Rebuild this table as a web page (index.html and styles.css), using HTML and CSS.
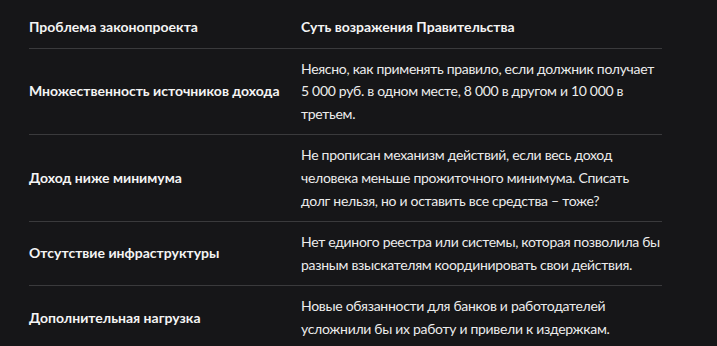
FILE: index.html
```html
<!DOCTYPE html>
<html lang="ru">
<head>
<meta charset="utf-8">
<link rel="stylesheet" href="styles.css">
</head>
<body>
<div class="table">
  <div class="cell head">Проблема законопроекта</div>
  <div class="cell head">Суть возражения Правительства</div>

  <div class="cell key">Множественность источников дохода</div>
  <div class="cell val">Неясно, как применять правило, если должник получает 5&nbsp;000 руб. в одном месте, 8&nbsp;000 в другом и 10&nbsp;000 в третьем.</div>

  <div class="cell key">Доход ниже минимума</div>
  <div class="cell val">Не прописан механизм действий, если весь доход человека меньше прожиточного минимума. Списать долг&nbsp;нельзя, но и оставить все средства – тоже?</div>

  <div class="cell key">Отсутствие инфраструктуры</div>
  <div class="cell val">Нет единого реестра или системы, которая позволила бы разным взыскателям координировать свои действия.</div>

  <div class="cell key last">Дополнительная нагрузка</div>
  <div class="cell val last">Новые обязанности для банков и работодателей усложнили бы их работу и привели к издержкам.</div>
</div>
</body>
</html>
```

FILE: styles.css
```css
html, body {
  margin: 0;
  background: #161618;
}
body {
  padding: 7px 0 0 29px;
  font-family: "Lato", "Open Sans", sans-serif;
  font-size: 14px;
  line-height: 22.6px;
  color: #ececec;
}
.table {
  display: grid;
  grid-template-columns: 272px 361px;
}
.cell {
  padding: 9px 0;
  border-bottom: 1px solid #3a3a3c;
  display: flex;
  align-items: center;
}
.head {
  font-weight: 700;
  color: #f4f4f4;
}
.key {
  font-weight: 700;
  color: #f4f4f4;
}
.val {
  display: block;
  letter-spacing: -0.3px;
}
.last {
  border-bottom: none;
}
```
